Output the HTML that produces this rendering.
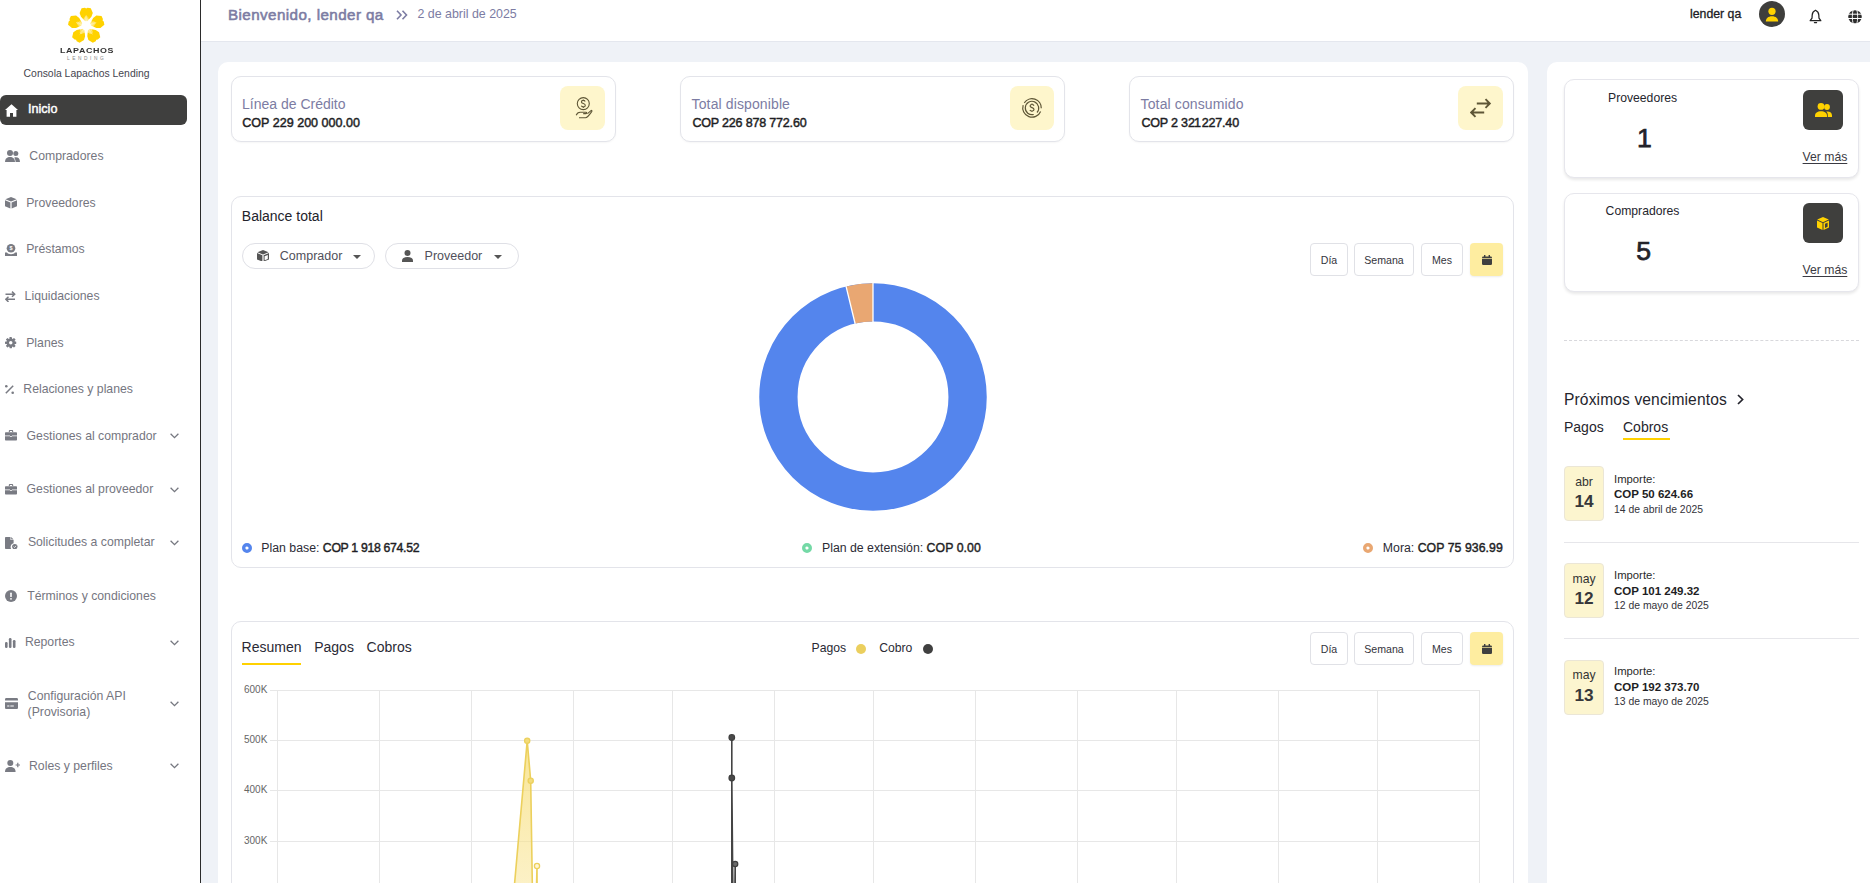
<!DOCTYPE html>
<html><head><meta charset="utf-8">
<style>
*{box-sizing:border-box;margin:0;padding:0}
html,body{width:1870px;height:883px;overflow:hidden}
body{font-family:"Liberation Sans",sans-serif;background:#eff2f7;position:relative;color:#222}
.a{position:absolute;white-space:nowrap;line-height:1}
#side{position:absolute;left:0;top:0;width:201px;height:883px;background:#fff;border-right:1px solid #2b2b2b}
#hdr{position:absolute;left:201px;top:0;width:1669px;height:42px;background:#fff;border-bottom:1px solid #e4e7ee}
.panel{position:absolute;background:#fff;border-radius:10px}
.mi{position:absolute;margin-top:0.8px;font-size:12.25px;color:#75767f;white-space:nowrap;line-height:1}
.ic{position:absolute}
.chev{position:absolute;left:170px;width:9px;height:6px}
.card{position:absolute;border:1px solid #e3e4ea;border-radius:10px;background:#fff;box-shadow:0 1px 2px rgba(0,0,0,.04)}
.btn{position:absolute;top:243px;height:33px;border:1px solid #e0e1e6;border-radius:4px;font-size:10.6px;color:#34343c;display:flex;align-items:center;justify-content:center;background:#fff}
.cal{background:#feeda0;border:none;box-shadow:0 1px 2px rgba(0,0,0,.08)}
.rcard{position:absolute;left:1564px;width:295px;height:99px;background:#fff;border:1px solid #e6e6ec;border-radius:10px;box-shadow:0 2px 3px rgba(0,0,0,.09)}
.dbox{position:absolute;left:1803px;width:40px;height:40px;background:#3f3f3d;border-radius:6px;display:flex;align-items:center;justify-content:center}
.vm{position:absolute;left:1802.6px;font-size:12.2px;line-height:1;color:#3a3a42;text-decoration:underline;text-underline-offset:2px;white-space:nowrap}
.dt{position:absolute;left:1564px;width:40px;height:55px;background:#fcf5cf;border:1px solid #ebe6d6;border-radius:4px;text-align:center}
.dt .m{position:absolute;left:0;width:100%;top:8.6px;font-size:12.2px;line-height:1;color:#333}
.dt .d{position:absolute;left:0;width:100%;top:26.4px;font-size:17.2px;font-weight:700;line-height:1;color:#37373a}
.imp{left:1614px;font-size:11.3px;color:#2a2a2a;margin-top:-0.2px}
.amt{left:1614px;font-size:11.5px;font-weight:700;color:#1e1e24;margin-top:0.9px}
.fd{left:1614px;font-size:10.4px;color:#33333a;margin-top:1.2px}
.sep{position:absolute;left:1564px;width:295px;height:1px;background:#e6e6ea}
.sb{font-weight:400;-webkit-text-stroke:0.42px #1e1e24;color:#1e1e24;letter-spacing:0.05px}
</style></head><body>

<!-- SIDEBAR -->
<div id="side">
 <!-- logo -->
 <svg class="ic" style="left:66px;top:5px" width="40" height="40" viewBox="-20 -20 40 40">
  <defs><path id="pt" d="M-0.8,-4.2 L-5.2,-9 L-6.6,-12.8 L-4.6,-17.6 L-1.3,-18 L0,-17.2 L1.3,-18 L4.6,-17.6 L6.6,-12.8 L5.2,-9 L0.8,-4.2Z"/></defs>
  <g fill="#ffd200" transform="translate(0.2,0.8)">
   <use href="#pt"/>
   <use href="#pt" transform="rotate(72)"/>
   <use href="#pt" transform="rotate(144)"/>
   <use href="#pt" transform="rotate(216)"/>
   <use href="#pt" transform="rotate(288)"/>
   <circle r="4.6" fill="#fff"/>
   <path d="M0,0 L-2.57,-7.05 M0,0 L-1.77,-8.31 M0,0 L-0.83,-9.46 M0,0 L0.00,-10.50 M0,0 L0.83,-9.46 M0,0 L1.77,-8.31 M0,0 L2.57,-7.05 M0,0 L5.91,-4.62 M0,0 L7.36,-4.25 M0,0 L8.74,-3.71 M0,0 L9.99,-3.24 M0,0 L9.26,-2.14 M0,0 L8.45,-0.89 M0,0 L7.50,0.26 M0,0 L6.22,4.19 M0,0 L6.32,5.69 M0,0 L6.23,7.17 M0,0 L6.17,8.49 M0,0 L4.89,8.14 M0,0 L3.46,7.77 M0,0 L2.07,7.21 M0,0 L-2.07,7.21 M0,0 L-3.46,7.77 M0,0 L-4.89,8.14 M0,0 L-6.17,8.49 M0,0 L-6.23,7.17 M0,0 L-6.32,5.69 M0,0 L-6.22,4.19 M0,0 L-7.50,0.26 M0,0 L-8.45,-0.89 M0,0 L-9.26,-2.14 M0,0 L-9.99,-3.24 M0,0 L-8.74,-3.71 M0,0 L-7.36,-4.25 M0,0 L-5.91,-4.62" stroke="#fff" stroke-width="0.5"/>
  </g>
 </svg>
 <div class="a" style="left:59.8px;top:47.2px;font-size:7.4px;font-weight:700;letter-spacing:0.5px;color:#333;transform:scaleX(1.2);transform-origin:0 0">LAPACHOS</div>
 <div class="a" style="left:67px;top:56.5px;font-size:4.8px;letter-spacing:2.55px;color:#888">LENDING</div>
 <div class="a" style="left:23.6px;top:69.4px;font-size:10.4px;color:#45454f">Consola Lapachos Lending</div>

 <!-- active -->
 <div style="position:absolute;left:0;top:95px;width:187px;height:30px;background:#3f3f3e;border-radius:6px"></div>
 <svg class="ic" style="left:5px;top:103.5px" width="13" height="13" viewBox="0 0 13 13"><path d="M6.5,0.3 L13,6 L11.4,6 L11.4,12.7 L8,12.7 L8,8.9 L5,8.9 L5,12.7 L1.6,12.7 L1.6,6 L0,6Z" fill="#fff"/></svg>
 <div class="mi" style="left:28px;top:101.9px;color:#fff;font-size:12.6px;letter-spacing:0px;-webkit-text-stroke:0.45px #fff">Inicio</div>

 <svg class="ic" style="left:5px;top:149.8px" width="15" height="12.5" viewBox="0 0 15 12.5" fill="#797b83"><circle cx="5" cy="3" r="3"/><circle cx="10.8" cy="3.6" r="2.5"/><path d="M0,12.4 C0,8.6 2,7 5,7 C8,7 10,8.6 10,12.4Z"/><path d="M10.6,12.4 C10.6,10 10,8.6 9.2,7.7 C9.8,7.3 10.3,7.2 11,7.2 C13.4,7.2 15,8.7 15,12.4Z"/></svg>
 <div class="mi" style="left:29.3px;top:149.5px">Compradores</div>

 <svg class="ic" style="left:5px;top:197px" width="12" height="11.5" viewBox="0 0 12 11.5" fill="#797b83"><path d="M6,0 L11.6,2.3 L6,4.6 L0.4,2.3Z"/><path d="M0,3.2 L5.4,5.4 L5.4,11.5 L0,9.3Z"/><path d="M12,3.2 L6.6,5.4 L6.6,11.5 L12,9.3Z"/></svg>
 <div class="mi" style="left:26.2px;top:196.3px">Proveedores</div>

 <svg class="ic" style="left:5px;top:243.7px" width="12" height="12" viewBox="0 0 12 12" fill="#797b83"><circle cx="6" cy="4.3" r="4.3"/><path d="M0,8.5 L2,8.5 C2.5,9.6 4,10.2 6,10.2 C8,10.2 9.5,9.6 10,8.5 L12,8.5 L12,12 L0,12Z"/><text x="6" y="6.4" font-size="5.5" font-weight="700" text-anchor="middle" fill="#fff" font-family="Liberation Sans">$</text></svg>
 <div class="mi" style="left:26.2px;top:242.4px">Préstamos</div>

 <svg class="ic" style="left:5px;top:290.5px" width="10.5" height="11.5" viewBox="0 0 10.5 11.5" fill="none" stroke="#797b83" stroke-width="1.5"><path d="M0.5,3.2 L9.5,3.2 M7,0.6 L9.7,3.2 L7,5.8"/><path d="M10,8.3 L1,8.3 M3.5,5.7 L0.8,8.3 L3.5,10.9"/></svg>
 <div class="mi" style="left:24.6px;top:289.4px">Liquidaciones</div>

 <svg class="ic" style="left:5px;top:337.3px" width="11.5" height="11.5" viewBox="-6 -6 12 12"><defs><mask id="gm"><rect x="-6" y="-6" width="12" height="12" fill="#fff"/><circle r="1.8" fill="#000"/></mask></defs><g fill="#797b83" mask="url(#gm)"><circle r="4.4"/><g id="tt"><rect x="-1.3" y="-6" width="2.6" height="3" rx=".5"/><rect x="-1.3" y="3" width="2.6" height="3" rx=".5"/></g><use href="#tt" transform="rotate(45)"/><use href="#tt" transform="rotate(90)"/><use href="#tt" transform="rotate(135)"/></g></svg>
 <div class="mi" style="left:26.2px;top:336.5px">Planes</div>

 <svg class="ic" style="left:5px;top:385.3px" width="9" height="9" viewBox="0 0 9 9"><path d="M8.2,0.8 L0.8,8.2" stroke="#797b83" stroke-width="1.5"/><circle cx="1.3" cy="1.3" r="1.3" fill="#797b83"/><circle cx="7.7" cy="7.7" r="1.3" fill="#797b83"/></svg>
 <div class="mi" style="left:23.3px;top:382.4px">Relaciones y planes</div>

 <svg class="ic" style="left:5px;top:430.2px" width="12" height="10.5" viewBox="0 0 12 10.5" fill="#797b83"><path d="M3.8,2 L3.8,0.9 C3.8,0.4 4.2,0 4.7,0 L7.3,0 C7.8,0 8.2,0.4 8.2,0.9 L8.2,2 L7.1,2 L7.1,1.1 L4.9,1.1 L4.9,2Z"/><path d="M1,2.2 L11,2.2 C11.6,2.2 12,2.6 12,3.2 L12,5.4 L7,5.4 L7,6.3 L5,6.3 L5,5.4 L0,5.4 L0,3.2 C0,2.6 0.4,2.2 1,2.2Z"/><path d="M0,6.2 L5,6.2 L5,7 L7,7 L7,6.2 L12,6.2 L12,9.5 C12,10.1 11.6,10.5 11,10.5 L1,10.5 C0.4,10.5 0,10.1 0,9.5Z"/></svg>
 <div class="mi" style="left:26.6px;top:429.3px">Gestiones al comprador</div>
 <svg class="chev" style="top:433.2px" viewBox="0 0 9 6"><path d="M0.6,0.8 L4.5,4.7 L8.4,0.8" fill="none" stroke="#767880" stroke-width="1.3"/></svg>

 <svg class="ic" style="left:5px;top:484.4px" width="12" height="10.5" viewBox="0 0 12 10.5" fill="#797b83"><path d="M3.8,2 L3.8,0.9 C3.8,0.4 4.2,0 4.7,0 L7.3,0 C7.8,0 8.2,0.4 8.2,0.9 L8.2,2 L7.1,2 L7.1,1.1 L4.9,1.1 L4.9,2Z"/><path d="M1,2.2 L11,2.2 C11.6,2.2 12,2.6 12,3.2 L12,5.4 L7,5.4 L7,6.3 L5,6.3 L5,5.4 L0,5.4 L0,3.2 C0,2.6 0.4,2.2 1,2.2Z"/><path d="M0,6.2 L5,6.2 L5,7 L7,7 L7,6.2 L12,6.2 L12,9.5 C12,10.1 11.6,10.5 11,10.5 L1,10.5 C0.4,10.5 0,10.1 0,9.5Z"/></svg>
 <div class="mi" style="left:26.6px;top:482.3px">Gestiones al proveedor</div>
 <svg class="chev" style="top:486.7px" viewBox="0 0 9 6"><path d="M0.6,0.8 L4.5,4.7 L8.4,0.8" fill="none" stroke="#767880" stroke-width="1.3"/></svg>

 <svg class="ic" style="left:5px;top:537px" width="13" height="12" viewBox="0 0 13 12" fill="#797b83"><path d="M0.8,0 L5.5,0 L5.5,3 L8.6,3 L8.6,6.2 C6.8,6.6 5.6,8.2 5.6,10 C5.6,10.7 5.8,11.4 6.1,12 L0.8,12 C0.3,12 0,11.7 0,11.2 L0,0.8 C0,0.3 0.3,0 0.8,0Z"/><path d="M6.2,0 L8.6,2.4 L6.2,2.4Z"/><circle cx="9.8" cy="9.6" r="2.7"/><path d="M8.6,9.6 L9.5,10.5 L11.1,8.8" fill="none" stroke="#fff" stroke-width="0.8"/></svg>
 <div class="mi" style="left:27.9px;top:535.4px">Solicitudes a completar</div>
 <svg class="chev" style="top:539.7px" viewBox="0 0 9 6"><path d="M0.6,0.8 L4.5,4.7 L8.4,0.8" fill="none" stroke="#767880" stroke-width="1.3"/></svg>

 <svg class="ic" style="left:5px;top:589.8px" width="12" height="12" viewBox="0 0 12 12"><circle cx="6" cy="6" r="6" fill="#797b83"/><rect x="5.2" y="2.6" width="1.6" height="4.4" rx=".6" fill="#fff"/><circle cx="6" cy="8.8" r=".9" fill="#fff"/></svg>
 <div class="mi" style="left:27.2px;top:589.4px">Términos y condiciones</div>

 <svg class="ic" style="left:5px;top:637.7px" width="10.5" height="10" viewBox="0 0 10.5 10" fill="#797b83"><rect x="0" y="4" width="2.6" height="6" rx="1.2"/><rect x="3.9" y="0" width="2.6" height="10" rx="1.2"/><rect x="7.9" y="2" width="2.6" height="8" rx="1.2"/></svg>
 <div class="mi" style="left:24.9px;top:635.6px">Reportes</div>
 <svg class="chev" style="top:639.7px" viewBox="0 0 9 6"><path d="M0.6,0.8 L4.5,4.7 L8.4,0.8" fill="none" stroke="#767880" stroke-width="1.3"/></svg>

 <svg class="ic" style="left:5px;top:698.4px" width="13" height="11" viewBox="0 0 13 11" fill="#797b83"><path d="M1.3,0 L11.7,0 C12.4,0 13,0.6 13,1.3 L13,2.6 L0,2.6 L0,1.3 C0,0.6 0.6,0 1.3,0Z"/><path d="M0,4.2 L13,4.2 L13,9.7 C13,10.4 12.4,11 11.7,11 L1.3,11 C0.6,11 0,10.4 0,9.7Z M2.2,7.6 L2.2,8.5 L4.4,8.5 L4.4,7.6Z M5.3,7.6 L5.3,8.5 L8.8,8.5 L8.8,7.6Z" fill-rule="evenodd"/></svg>
 <div class="mi" style="left:27.8px;top:689.6px">Configuración API</div>
 <div class="mi" style="left:27.6px;top:705px">(Provisoria)</div>
 <svg class="chev" style="top:700.5px" viewBox="0 0 9 6"><path d="M0.6,0.8 L4.5,4.7 L8.4,0.8" fill="none" stroke="#767880" stroke-width="1.3"/></svg>

 <svg class="ic" style="left:5px;top:760px" width="15" height="12" viewBox="0 0 15 12" fill="#797b83"><circle cx="5.3" cy="3" r="3"/><path d="M0,12 C0,8.4 2.2,7 5.3,7 C8.4,7 10.6,8.4 10.6,12Z"/><path d="M12.8,2.8 L12.8,7.2 M10.6,5 L15,5" stroke="#797b83" stroke-width="1.2"/></svg>
 <div class="mi" style="left:29px;top:759.4px">Roles y perfiles</div>
 <svg class="chev" style="top:762.8px" viewBox="0 0 9 6"><path d="M0.6,0.8 L4.5,4.7 L8.4,0.8" fill="none" stroke="#767880" stroke-width="1.3"/></svg>
</div>


<!-- HEADER -->
<div id="hdr"></div>
<div class="a" style="left:228px;top:7.3px;font-size:15.2px;letter-spacing:0.42px;-webkit-text-stroke:0.55px #7c7ca3;color:#7c7ca3">Bienvenido, lender qa</div>
<svg class="ic" style="left:396px;top:10px" width="12" height="10" viewBox="0 0 12 10" fill="none" stroke="#7c7ca3" stroke-width="1.6"><path d="M1,0.8 L5,5 L1,9.2 M6.5,0.8 L10.5,5 L6.5,9.2"/></svg>
<div class="a" style="left:417.5px;top:7.5px;font-size:12.4px;color:#7c7ca3">2 de abril de 2025</div>
<div class="a" style="left:1690px;top:8.2px;font-size:12.3px;font-weight:400;color:#1c1c24;-webkit-text-stroke:0.3px #1c1c24">lender qa</div>
<svg class="ic" style="left:1759px;top:1px" width="26" height="26" viewBox="0 0 26 26"><circle cx="13" cy="13" r="13" fill="#3e3e3c"/><circle cx="13" cy="10.3" r="3.6" fill="#ffd200"/><path d="M6.8,20.6 C6.8,17.3 9.2,15.2 13,15.2 C16.8,15.2 19.2,17.3 19.2,20.6Z" fill="#ffd200"/></svg>
<svg class="ic" style="left:1809px;top:9px" width="13" height="15" viewBox="0 0 13 15"><path d="M6.5,1.2 C4.2,2.2 3.3,3.6 3.2,6 L3,9.2 L1.2,11.7 L11.8,11.7 L10,9.2 L9.8,6 C9.7,3.6 8.8,2.2 6.5,1.2Z" fill="none" stroke="#222" stroke-width="1.25" stroke-linejoin="round"/><path d="M5.4,13.6 L7.6,13.6" stroke="#222" stroke-width="1.2" stroke-linecap="round"/></svg>
<svg class="ic" style="left:1848px;top:10px" width="14" height="13.5" viewBox="0 0 14 13.5"><ellipse cx="7" cy="6.75" rx="6.8" ry="6.6" fill="#2e2e2e"/><path d="M0,4.2 L14,4.2 M0,8.5 L14,8.5" stroke="#fff" stroke-width="1"/><path d="M5.1,0 C4.1,3 4.1,10.5 5.1,13.5 M8.9,0 C9.9,3 9.9,10.5 8.9,13.5" fill="none" stroke="#fff" stroke-width="0.9"/></svg>


<!-- MAIN PANEL -->
<div class="panel" style="left:218px;top:62px;width:1310px;height:900px"></div>

<!-- stat cards -->
<div class="card" style="left:231px;top:76px;width:385px;height:66px"></div>
<div class="a" style="left:242px;top:96.9px;font-size:14px;color:#7c7ca3">Línea de Crédito</div>
<div class="a" style="left:242.3px;top:117px;font-size:12.55px;-webkit-text-stroke:0.45px #1e1e24;color:#1e1e24">COP 229 200 000.00</div>
<div style="position:absolute;left:560px;top:86px;width:45px;height:44px;background:#fef6cc;border-radius:8px"></div>
<svg class="ic" style="left:575px;top:96px" width="18" height="24" viewBox="0 0 18 24" fill="none" stroke="#5e5636" stroke-width="1.1"><circle cx="8.3" cy="7.6" r="6"/><path d="M10.2,5.4 C9.8,4.7 9,4.4 8.3,4.4 C7.2,4.4 6.4,5 6.4,5.9 C6.4,8 10.3,7.2 10.3,9.4 C10.3,10.3 9.4,10.9 8.3,10.9 C7.4,10.9 6.6,10.5 6.3,9.8 M8.3,3.4 L8.3,4.4 M8.3,10.9 L8.3,11.9"/><path d="M1.2,19.3 C2,17 3.3,16.2 5.2,16.2 L11,16.2 C11.8,16.2 12,17.6 11,17.6 L8.2,17.6 M4,21.8 L10.5,21.8 C12.5,21.8 14.2,19.2 16.8,15.5 C17.3,14.8 16.6,14.1 16,14.6 L12.5,17.6"/></svg>

<div class="card" style="left:680px;top:76px;width:385px;height:66px"></div>
<div class="a" style="left:691.6px;top:96.9px;font-size:14px;letter-spacing:0.12px;color:#7c7ca3">Total disponible</div>
<div class="a" style="left:692.4px;top:117px;font-size:12.55px;letter-spacing:-0.2px;-webkit-text-stroke:0.45px #1e1e24;color:#1e1e24">COP 226 878 772.60</div>
<div style="position:absolute;left:1010px;top:86px;width:44px;height:44px;background:#fef6cc;border-radius:8px"></div>
<svg class="ic" style="left:1021px;top:97px" width="22" height="22" viewBox="0 0 22 22" fill="none" stroke="#5e5636" stroke-width="1.2"><path d="M19.62,14.48 A9.30,9.30 0 0,1 2.16,8.13 M3.29,5.80 A9.30,9.30 0 0,1 20.29,11.32 M12.73,17.47 A6.70,6.70 0 1,1 15.98,15.48"/><path d="M13,8.6 C12.6,7.9 11.9,7.5 11,7.5 C9.9,7.5 9.1,8.1 9.1,9 C9.1,11 13,10.3 13,12.5 C13,13.4 12.1,14 11,14 C10,14 9.2,13.6 8.9,12.9 M11,6.4 L11,7.5 M11,14 L11,15.1"/></svg>

<div class="card" style="left:1129px;top:76px;width:385px;height:66px"></div>
<div class="a" style="left:1140.6px;top:96.9px;font-size:14px;letter-spacing:0.12px;color:#7c7ca3">Total consumido</div>
<div class="a" style="left:1141.4px;top:117px;font-size:12.55px;letter-spacing:-0.2px;-webkit-text-stroke:0.45px #1e1e24;color:#1e1e24">COP 2 32<span style="margin-left:-0.8px;margin-right:-2.2px">1</span> 227.40</div>
<div style="position:absolute;left:1458px;top:86px;width:45px;height:44px;background:#fef6cc;border-radius:8px"></div>
<svg class="ic" style="left:1470px;top:98px" width="22" height="20" viewBox="0 0 22 20" fill="none" stroke="#5e5636" stroke-width="1.9"><path d="M6.8,5.5 L19.8,5.5 M15.5,1.2 L19.8,5.5 L15.5,9.8"/><path d="M14.2,14.5 L1.2,14.5 M5.5,10.2 L1.2,14.5 L5.5,18.8"/></svg>

<!-- balance card -->
<div class="card" style="left:231px;top:196px;width:1283px;height:372px;box-shadow:none"></div>
<div class="a" style="left:241.8px;top:209.1px;font-size:14px;color:#23232b">Balance total</div>
<div style="position:absolute;left:242px;top:243px;width:133px;height:26px;border:1px solid #dfe0e6;border-radius:13px"></div>
<svg class="ic" style="left:257px;top:249.7px" width="12" height="11.6" viewBox="0 0 12 11.6" fill="#555"><path d="M6,0 L11.6,2.2 L6,4.4 L0.4,2.2Z"/><path d="M0,3.1 L5.4,5.2 L5.4,11.6 L0,9.4Z"/><path d="M12,3.1 L6.6,5.2 L6.6,11.6 L12,9.4Z" fill="#555" opacity="1"/><path d="M7.6,6.2 L10.8,5 L10.8,8.9 L7.6,10.2Z" fill="#fff"/></svg>
<div class="a" style="left:279.8px;top:250.1px;font-size:12.5px;color:#50505a">Comprador</div>
<svg class="ic" style="left:352.5px;top:254.5px" width="8" height="4" viewBox="0 0 8 4"><path d="M0,0 L8,0 L4,4Z" fill="#555"/></svg>
<div style="position:absolute;left:385px;top:243px;width:134px;height:26px;border:1px solid #dfe0e6;border-radius:13px"></div>
<svg class="ic" style="left:401.5px;top:249.5px" width="11" height="12" viewBox="0 0 11 12" fill="#555"><circle cx="5.5" cy="3" r="3"/><path d="M0,12 L0,10.5 C0,8.3 2,7 5.5,7 C9,7 11,8.3 11,10.5 L11,12Z"/></svg>
<div class="a" style="left:424.6px;top:250.1px;font-size:12.5px;color:#50505a">Proveedor</div>
<svg class="ic" style="left:494.3px;top:254.5px" width="8" height="4" viewBox="0 0 8 4"><path d="M0,0 L8,0 L4,4Z" fill="#555"/></svg>

<div class="btn" style="left:1310px;width:38px">Día</div>
<div class="btn" style="left:1354px;width:60px">Semana</div>
<div class="btn" style="left:1421px;width:42px">Mes</div>
<div class="btn cal" style="left:1470px;width:33px"><svg width="10" height="10" viewBox="0 0 10 10" fill="#3f3f3f"><rect x="0" y="1.5" width="10" height="8.5" rx="1.2"/><rect x="2" y="0" width="1.4" height="2.5"/><rect x="6.6" y="0" width="1.4" height="2.5"/><rect x="0" y="3.2" width="10" height="0.7" fill="#fdeca0"/></svg></div>

<!-- donut -->
<svg class="ic" style="left:755px;top:279px" width="236" height="236" viewBox="-118 -118 236 236">
 <circle r="94.6" fill="none" stroke="#5485ed" stroke-width="38.3"/>
 <path d="M0,-113.8 A113.8,113.8 0 0,0 -26.9,-110.6 L-17.9,-73.4 A75.5,75.5 0 0,1 0,-75.5Z" fill="#e9a772"/>
 <path d="M0,-114 L0,-75 M-27,-110.8 L-17.8,-73" stroke="#fff" stroke-width="1.3"/>
</svg>

<!-- legend -->
<svg class="ic" style="left:242px;top:543px" width="10" height="10" viewBox="0 0 10 10"><circle cx="5" cy="5" r="3.3" fill="none" stroke="#5485ed" stroke-width="3.4"/></svg>
<div class="a" style="left:261.3px;top:541.5px;font-size:12.3px;color:#2b2b35">Plan base: <b class="sb" style="letter-spacing:-0.33px">COP 1 918 674.52</b></div>
<svg class="ic" style="left:802px;top:543px" width="10" height="10" viewBox="0 0 10 10"><circle cx="5" cy="5" r="3.3" fill="none" stroke="#74d9a6" stroke-width="3.4"/></svg>
<div class="a" style="left:822px;top:541.5px;font-size:12.3px;color:#2b2b35">Plan de extensión: <b class="sb">COP 0.00</b></div>
<svg class="ic" style="left:1363px;top:543px" width="10" height="10" viewBox="0 0 10 10"><circle cx="5" cy="5" r="3.3" fill="none" stroke="#e9a772" stroke-width="3.4"/></svg>
<div class="a" style="left:1382.8px;top:541.5px;font-size:12.3px;color:#2b2b35">Mora: <b class="sb">COP 75 936.99</b></div>

<!-- chart card -->
<div class="card" style="left:231px;top:621px;width:1283px;height:300px;box-shadow:none"></div>
<div class="a" style="left:241.6px;top:640.3px;font-size:14px;color:#2a2a35">Resumen</div>
<div style="position:absolute;left:242px;top:663px;width:59px;height:2px;background:#ffd100"></div>
<div class="a" style="left:314.2px;top:640.3px;font-size:14px;color:#2a2a35">Pagos</div>
<div class="a" style="left:366.6px;top:640.3px;font-size:14px;color:#2a2a35">Cobros</div>
<div class="a" style="left:811.6px;top:641.5px;font-size:12.2px;color:#2a2a35">Pagos</div>
<div style="position:absolute;left:856px;top:644px;width:10px;height:10px;border-radius:5px;background:#ebcf5e"></div>
<div class="a" style="left:879.2px;top:641.5px;font-size:12.2px;color:#2a2a35">Cobro</div>
<div style="position:absolute;left:923px;top:644px;width:10px;height:10px;border-radius:5px;background:#404040"></div>

<div class="btn" style="left:1310px;top:632px;width:38px">Día</div>
<div class="btn" style="left:1354px;top:632px;width:60px">Semana</div>
<div class="btn" style="left:1421px;top:632px;width:42px">Mes</div>
<div class="btn cal" style="left:1470px;top:632px;width:33px"><svg width="10" height="10" viewBox="0 0 10 10" fill="#3f3f3f"><rect x="0" y="1.5" width="10" height="8.5" rx="1.2"/><rect x="2" y="0" width="1.4" height="2.5"/><rect x="6.6" y="0" width="1.4" height="2.5"/><rect x="0" y="3.2" width="10" height="0.7" fill="#fdeca0"/></svg></div>

<svg class="ic" style="left:0;top:0" width="1870" height="883" viewBox="0 0 1870 883" shape-rendering="crispEdges">
 <g stroke="#e7e7e7" stroke-width="1">
  <path d="M270,690.5 H1480 M270,740.5 H1480 M270,790.5 H1480 M270,841.5 H1480"/>
  <path d="M277.5,690 V883 M379.5,690 V883 M471.5,690 V883 M573.5,690 V883 M672.5,690 V883 M774.5,690 V883 M873.5,690 V883 M975.5,690 V883 M1077.5,690 V883 M1176.5,690 V883 M1278.5,690 V883 M1377.5,690 V883 M1479.5,690 V883"/>
 </g>
</svg>
<div class="a" style="left:244px;top:684.5px;font-size:10px;color:#666">600K</div>
<div class="a" style="left:244px;top:734.5px;font-size:10px;color:#666">500K</div>
<div class="a" style="left:244px;top:784.5px;font-size:10px;color:#666">400K</div>
<div class="a" style="left:244px;top:835.5px;font-size:10px;color:#666">300K</div>
<svg class="ic" style="left:0;top:0" width="1870" height="883" viewBox="0 0 1870 883">
 <defs><linearGradient id="yg" x1="0" y1="740" x2="0" y2="990" gradientUnits="userSpaceOnUse"><stop offset="0" stop-color="#f6dc72" stop-opacity=".75"/><stop offset="1" stop-color="#fbeaa8" stop-opacity=".35"/></linearGradient></defs>
 <path d="M505,992 L527.2,740.8 L530.7,780.8 L534,992 L537,866 L537.5,992Z" fill="url(#yg)" stroke="#ecd05c" stroke-width="1.6" stroke-linejoin="round"/>
 <g fill="#f3dc7c" stroke="#ecd05c" stroke-width="1.3"><circle cx="527.2" cy="740.8" r="2.6"/><circle cx="530.7" cy="780.8" r="2.6"/><circle cx="537" cy="866" r="2.6" fill="#fff6d6"/></g>
 <path d="M731.8,992 L731.8,737.5 L731.8,778 L733.8,992 L735.2,864 L735.4,992Z" fill="#4a4a4a" stroke="#444" stroke-width="1.6" stroke-linejoin="round"/>
 <g fill="#4a4a4a" stroke="#3e3e3e" stroke-width="1.2"><circle cx="731.8" cy="737.5" r="2.8"/><circle cx="731.8" cy="778" r="2.8"/><circle cx="735.2" cy="864" r="2.6" fill="#6a6a6a"/></g>
</svg>

<!-- RIGHT PANEL -->
<div class="panel" style="left:1547px;top:62px;width:360px;height:900px"></div>
<div class="rcard" style="top:79px"></div>
<div class="a" style="left:1608px;top:91.8px;font-size:12.2px;color:#25252d">Proveedores</div>
<div class="a" style="left:1637px;top:124.8px;font-size:26.6px;color:#23232a;-webkit-text-stroke:0.75px #23232a">1</div>
<div class="dbox" style="top:90px"><svg width="17" height="14" viewBox="0 0 17 14" fill="#ffd200"><circle cx="6" cy="3.4" r="3.4"/><circle cx="12" cy="4" r="2.9"/><path d="M0,14 L0,12.6 C0,9.8 2.5,8.2 6,8.2 C9.5,8.2 12,9.8 12,12.6 L12,14Z"/><path d="M12.8,14 L12.8,12.4 C12.8,10.7 12.2,9.5 11.2,8.6 C11.6,8.5 12,8.5 12.4,8.5 C15.2,8.5 17,10 17,12.6 L17,14Z"/></svg></div>
<div class="vm" style="top:151px">Ver más</div>

<div class="rcard" style="top:192.5px"></div>
<div class="a" style="left:1605.6px;top:205px;font-size:12.2px;color:#25252d">Compradores</div>
<div class="a" style="left:1636.2px;top:238px;font-size:26.6px;color:#23232a;-webkit-text-stroke:0.75px #23232a">5</div>
<div class="dbox" style="top:203px"><svg width="12" height="13" viewBox="0 0 12 13" fill="#ffd200"><path d="M6,0 L11.8,2.6 L6,5.2 L0.2,2.6Z"/><path d="M0,3.5 L5.5,6 L5.5,13 L0,10.5Z"/><path d="M12,3.5 L6.5,6 L6.5,13 L12,10.5Z"/><path d="M8,6.8 L10.6,5.7 L10.6,9.8 L8,11Z" fill="#3f3f3d"/></svg></div>
<div class="vm" style="top:264.3px">Ver más</div>

<div style="position:absolute;left:1564px;top:340px;width:295px;height:0;border-top:1px dashed #d8d8dc"></div>

<div class="a" style="left:1564px;top:391.6px;font-size:15.6px;letter-spacing:0.12px;color:#25252d">Próximos vencimientos</div>
<svg class="ic" style="left:1736.5px;top:393.5px" width="7" height="11" viewBox="0 0 7 11"><path d="M1,1 L5.6,5.5 L1,10" fill="none" stroke="#25252d" stroke-width="1.7"/></svg>
<div class="a" style="left:1564px;top:420px;font-size:14px;color:#25252d">Pagos</div>
<div class="a" style="left:1623px;top:420px;font-size:14px;color:#25252d">Cobros</div>
<div style="position:absolute;left:1623px;top:437.5px;width:47px;height:2px;background:#ffd100"></div>

<div class="dt" style="top:466px"><div class="m">abr</div><div class="d">14</div></div>
<div class="a imp" style="top:474.2px">Importe:</div>
<div class="a amt" style="top:488.3px">COP 50 624.66</div>
<div class="a fd" style="top:504.3px">14 de abril de 2025</div>
<div class="sep" style="top:542px"></div>

<div class="dt" style="top:563px"><div class="m">may</div><div class="d">12</div></div>
<div class="a imp" style="top:570.5px">Importe:</div>
<div class="a amt" style="top:584.8px">COP 101 249.32</div>
<div class="a fd" style="top:600.3px">12 de mayo de 2025</div>
<div class="sep" style="top:638px"></div>

<div class="dt" style="top:659.5px"><div class="m">may</div><div class="d">13</div></div>
<div class="a imp" style="top:666.5px">Importe:</div>
<div class="a amt" style="top:680.8px">COP 192 373.70</div>
<div class="a fd" style="top:696.3px">13 de mayo de 2025</div>


</body></html>
